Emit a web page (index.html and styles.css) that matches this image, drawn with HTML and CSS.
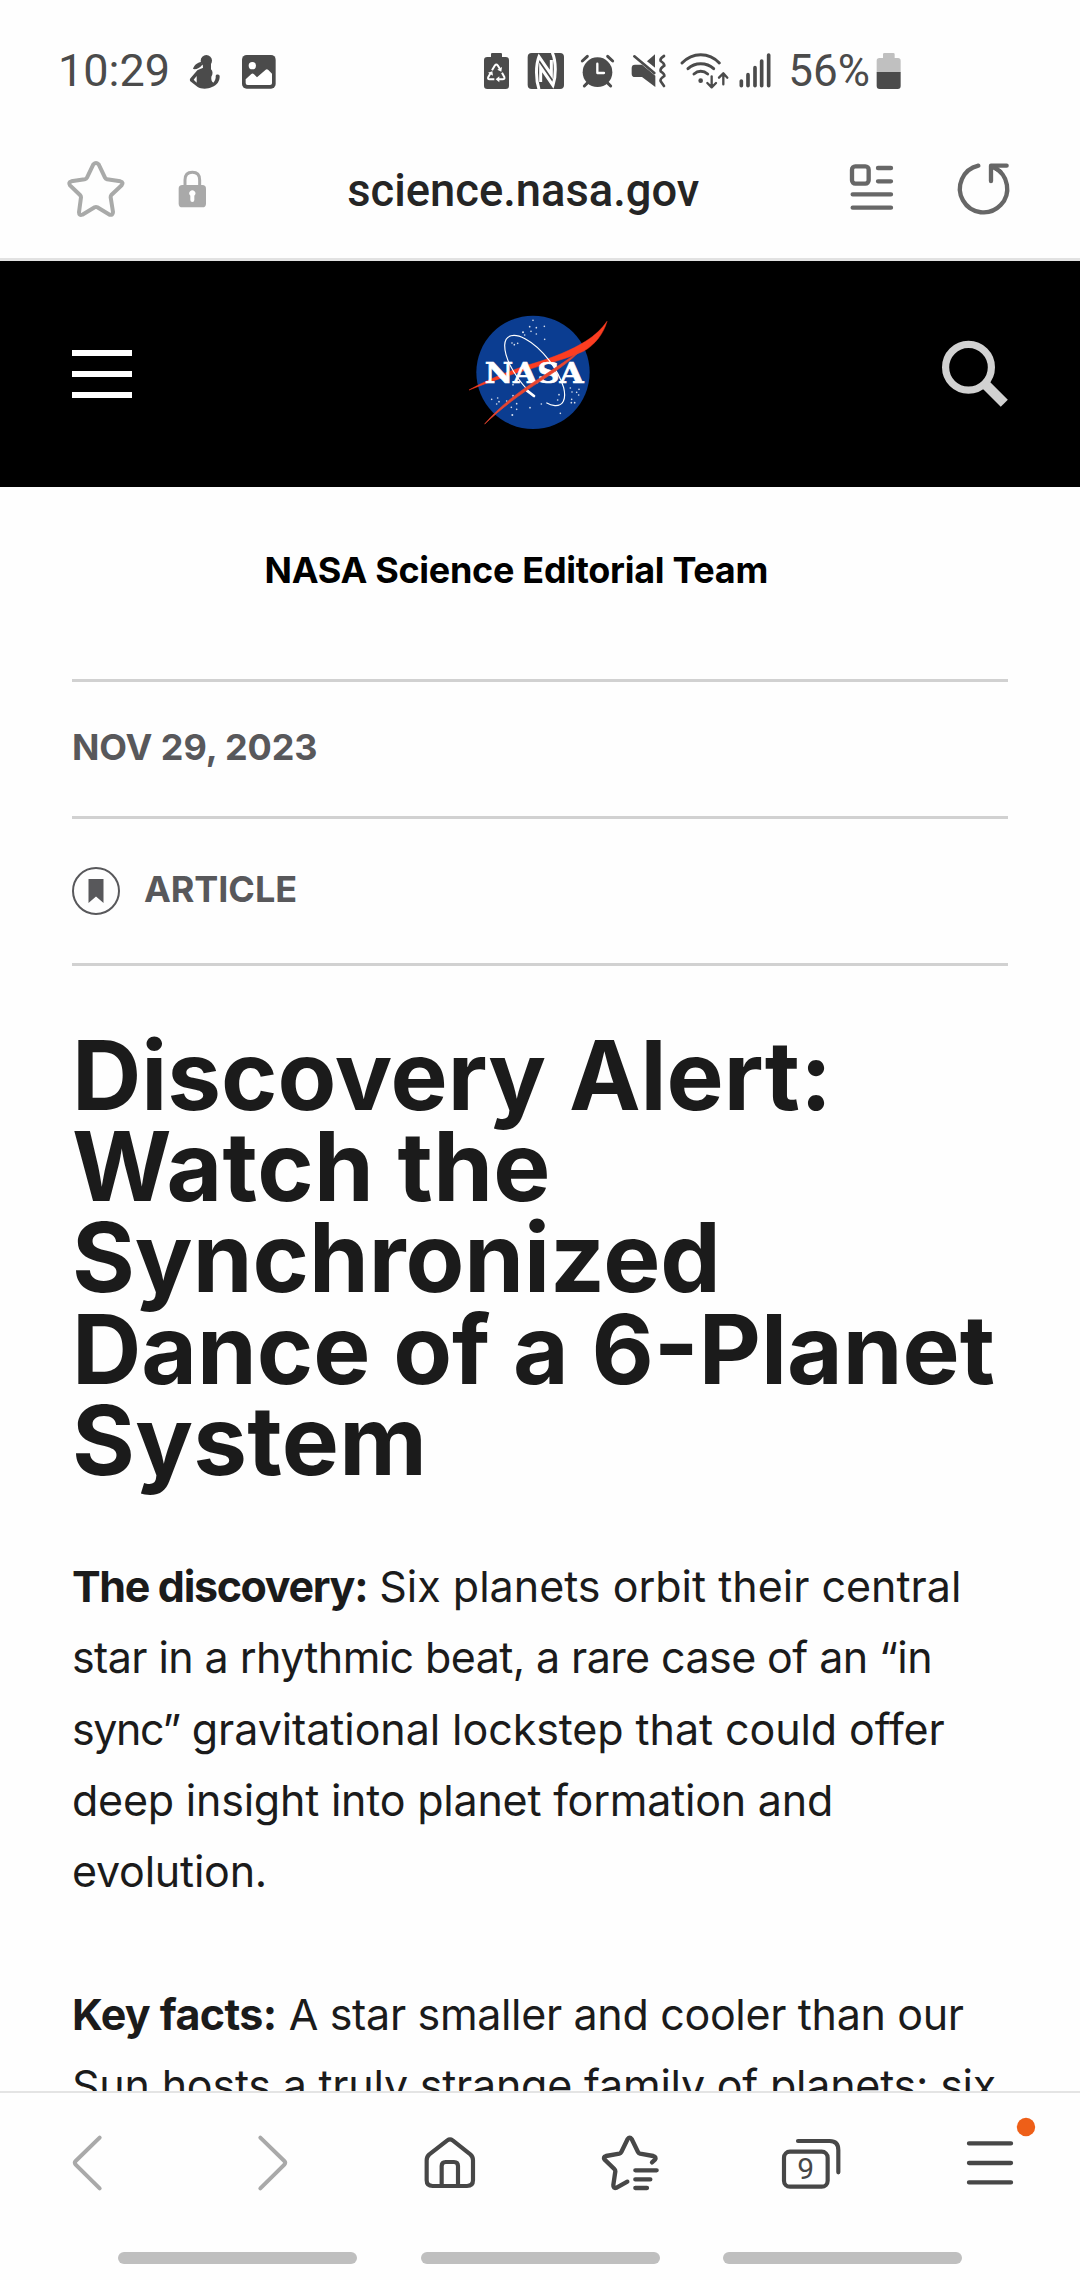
FILE: index.html
```html
<!DOCTYPE html>
<html lang="en">
<head>
<meta charset="utf-8">
<title>Discovery Alert: Watch the Synchronized Dance of a 6-Planet System</title>
<link rel="stylesheet" href="styles.css">
</head>
<body>
<div class="status">
  <span class="clock">10:29</span>
  <svg width="50" height="70" viewBox="430 0 150 210" fill="#4b4b4b">
    <circle cx="500" cy="62" r="17"/>
    <path d="M484 66 C474 68 462 76 460 87 C470 89 480 84 488 74Z"/>
    <path d="M489 70 H514 V88 C520 93 520 103 515 110 C514 118 516 125 521 128 C527 122 529 114 528 108 C529 103 537 102 540 107 C541 122 532 136 517 141 C503 148 484 147 474 141 L452 124 C450 120 450 117 453 114 L473 91 C479 86 488 86 490 83Z"/>
    <path d="M471 108 L462 119 L471 128Z" fill="#fff"/>
  </svg>
  <svg width="50" height="70" viewBox="580 0 150 210">
    <rect x="607" y="45" width="101" height="101" rx="14" fill="#4b4b4b"/>
    <circle cx="638" cy="77" r="11" fill="#fff"/>
    <path d="M618 118 L635 102 Q639 99 643 103 L652 112 L678 89 Q682 86 686 90 L697 101 V130 Q697 135 691 135 H624 Q618 135 618 129Z" fill="#fff"/>
  </svg>
  <div class="system">
    <svg width="46.67" height="70" viewBox="0 0 140 210">
      <path d="M66 39 H93 Q96 39 96 43 V51 H107 Q117 51 117 61 V137 Q117 147 107 147 H52 Q42 147 42 137 V61 Q42 51 52 51 H63 V43 Q63 39 66 39Z" fill="#4b4b4b"/>
      <g fill="none" stroke="#fff" stroke-width="6" stroke-linejoin="round"><path d="M66 91 L75 76 Q79 71 83 76 L90 87"/><path d="M96 98 L103 111 Q105 118 98 118 H86"/><path d="M73 118 H59 Q52 118 55 111 L62 99"/></g>
      <path d="M96 81 L94 95 L82 89Z M88 109 V127 L77 118Z M54 98 L67 94 L69 107Z" fill="#fff"/>
    </svg>
    <svg width="53.33" height="70" viewBox="140 0 160 210">
      <rect x="172" y="39" width="109" height="108" rx="12" fill="#4b4b4b"/>
      <path d="M206 148 C196 118 196 75 206 50 L243 104 V60 M246 38 C258 66 257 110 248 136 L211 82 V126" fill="none" stroke="#fff" stroke-width="9"/>
    </svg>
    <svg width="53.33" height="70" viewBox="300 0 160 210">
      <circle cx="382.500" cy="96.500" r="44.500" fill="#4b4b4b"/>
      <path d="M337 63 L352 49 M413 49 L428 63 M354 127 L343 138 M411 127 L422 138" stroke="#4b4b4b" stroke-width="9" stroke-linecap="round"/>
      <path d="M382 71 V99 H402" fill="none" stroke="#fff" stroke-width="7" stroke-linecap="round" stroke-linejoin="round"/>
    </svg>
    <svg width="50" height="70" viewBox="460 0 150 210">
      <path d="M496 74 H517 L557 107 V141 L517 111 H496 Q486 111 486 101 V84 Q486 74 496 74Z M530 65 L556 43 V87Z" fill="#4b4b4b"/>
      <path d="M500 43 L562 93" stroke="#fff" stroke-width="8"/>
      <path d="M494 49 L554 99" stroke="#4b4b4b" stroke-width="8" stroke-linecap="round"/>
      <path d="M583 48 Q570 56 573 63 Q584 70 584 77 Q570 86 573 94 Q585 101 584 108 Q570 117 573 124 L583 138" fill="none" stroke="#4b4b4b" stroke-width="8" stroke-linecap="round" stroke-linejoin="round"/>
    </svg>
    <svg width="61.67" height="70" viewBox="610 0 185 210" fill="none" stroke="#4b4b4b" stroke-width="9" stroke-linecap="round" stroke-linejoin="round">
      <path d="M637 69 Q661 44 693 44 Q726 44 749 69 M655 86 Q671 71 693 71 Q716 71 732 86 M673 102 Q682 94 693 94 Q705 94 714 102"/>
      <circle cx="693" cy="122" r="7" fill="#4b4b4b" stroke="none"/>
      <path d="M726 109 V141 M713 129 L726 142 L739 129 M761 133 V101 M748 113 L761 100 L773 113" stroke-width="7"/>
    </svg>
    <svg width="43.33" height="70" viewBox="795 0 130 210" stroke="#4b4b4b" stroke-width="11" stroke-linecap="round">
      <path d="M814 123 V137 M834 104 V137 M855 83 V137 M875 63 V137 M896 45 V137"/>
    </svg>
    <span class="charge">56%</span>
    <svg width="40" height="70" viewBox="1210 0 120 210">
      <path d="M1244 39 H1271 Q1275 39 1275 43 V54 H1285 Q1293 54 1293 62 V97 H1221 V62 Q1221 54 1229 54 H1240 V43 Q1240 39 1244 39Z" fill="#c0c0c0"/>
      <path d="M1221 96 H1293 V138 Q1293 147 1284 147 H1230 Q1221 147 1221 138Z" fill="#4b4b4b"/>
    </svg>
  </div>
</div>

<div class="address">
  <svg width="73.33" height="118" viewBox="60 0 220 354" fill="none" stroke="#a9aaa9" stroke-width="12" stroke-linejoin="round">
    <path d="M160 73 Q168 65 176 73 L195 113 Q197 117 201 118 L241 124 Q252 127 245 136 L214 165 Q212 168 212 172 L219 216 Q219 226 209 224 L172 202 Q168 200 164 202 L127 224 Q117 227 117 217 L123 172 Q123 168 120 165 L90 136 Q84 127 94 124 L134 118 Q139 117 141 113Z"/>
  </svg>
  <svg class="lock" width="50" height="118" viewBox="380 0 150 354">
    <path d="M434 140 V120 Q434 97 456 97 Q478 97 478 120 V140" fill="none" stroke="#a9a9a9" stroke-width="9"/>
    <rect x="415" y="135" width="82" height="67" rx="11" fill="#a9a9a9"/>
    <path d="M450 167 A9 9 0 1 1 462 167 V180 Q462 186 456 186 Q450 186 450 180Z" fill="#fff"/>
  </svg>
  <span class="url">science.nasa.gov</span>
  <svg width="56.67" height="118" viewBox="850 0 170 354" fill="none" stroke="#676767" stroke-width="13" stroke-linecap="round">
    <rect x="877" y="79" width="50" height="52" rx="10"/>
    <path d="M955 84 H994 M955 124 H994 M879 163 H994 M879 203 H994"/>
  </svg>
  <svg class="reload" width="66.67" height="118" viewBox="1170 0 200 354" fill="none" stroke="#676767" stroke-width="13" stroke-linecap="round" stroke-linejoin="round">
    <path d="M1255 77 A71 71 0 1 0 1303 83 M1293 123 V77 H1340"/>
    <path d="M1296 79 L1322 95" stroke-width="12"/>
  </svg>
</div>

<header class="masthead">
  <div class="burger"><i></i><i></i><i></i></div>
  <svg class="logo" width="180" height="160" viewBox="0 0 540 480">
    <circle cx="249" cy="247" r="170" fill="#0b3d91"/>
    <g fill="#fff" opacity=".85">
      <circle cx="249" cy="91" r="2.500"/><circle cx="239" cy="110" r="2.500"/><circle cx="259" cy="113" r="2.500"/><circle cx="283" cy="109" r="2.500"/><circle cx="243" cy="124" r="2.500"/><circle cx="259" cy="132" r="2.500"/><circle cx="219" cy="127" r="3"/><circle cx="224" cy="135" r="2.500"/><circle cx="284" cy="148" r="2.500"/><circle cx="186" cy="159" r="2.500"/><circle cx="193" cy="164" r="2.500"/><circle cx="203" cy="160" r="2.500"/><circle cx="189" cy="284" r="2.500"/><circle cx="189" cy="317" r="2.500"/><circle cx="125" cy="328" r="2.500"/><circle cx="143" cy="324" r="2.500"/><circle cx="147" cy="335" r="2.500"/><circle cx="140" cy="342" r="2.500"/><circle cx="170" cy="333" r="2.500"/><circle cx="184" cy="352" r="2.500"/><circle cx="200" cy="341" r="2.500"/><circle cx="200" cy="358" r="2.500"/><circle cx="187" cy="375" r="3"/><circle cx="240" cy="353" r="2.500"/><circle cx="274" cy="342" r="2.500"/><circle cx="331" cy="370" r="2.500"/><circle cx="327" cy="314" r="2.500"/><circle cx="323" cy="330" r="2.500"/><circle cx="361" cy="294" r="2.500"/><circle cx="366" cy="306" r="2.500"/><circle cx="387" cy="298" r="2.500"/><circle cx="380" cy="307" r="2.500"/><circle cx="386" cy="315" r="2.500"/><circle cx="365" cy="328" r="2.500"/><circle cx="364" cy="338" r="2.500"/><circle cx="374" cy="338" r="2.500"/>
    </g>
    <path d="M57 300 C110 270 175 243 244 222 C310 203 365 180 408 153 C436 135 455 117 471 94 C461 130 435 165 400 184 C350 207 295 220 240 237 C175 256 120 275 57 300Z" fill="#fc3d21" stroke="#fc3d21" stroke-width="1.500"/>
    <text class="wordmark" x="104" y="278" textLength="297" lengthAdjust="spacingAndGlyphs">NASA</text>
    <path d="M250 318 C208 277 164 216 164 166 C165 133 193 129 225 146 C278 174 325 241 341 293 C350 331 337 348 315 347 Q302 345 289 338" fill="none" stroke="#fff" stroke-width="3.500"/>
    <path d="M231 302 L252 318" stroke="#fff" stroke-width="8" stroke-linecap="round"/>
    <path d="M104 402 C150 347 211 302 267 266 C310 238 353 209 390 183 C359 214 319 243 275 271 C211 312 155 354 104 402Z" fill="#e8452f" stroke="#e8452f" stroke-width="2"/>
  </svg>
  <svg class="search" width="72" height="72" viewBox="936 335 72 72" fill="none" stroke="#d1d1d1">
    <circle cx="968.500" cy="367.300" r="22.900" stroke-width="7.200"/>
    <path d="M985 384 L1004.300 403.300" stroke-width="10"/>
  </svg>
</header>

<main class="page">
  <div class="row author">NASA Science Editorial Team</div>
  <div class="row date">NOV 29, 2023</div>
  <div class="row kind">
    <svg width="48" height="48" viewBox="0 0 48 48"><circle cx="24" cy="24" r="23" fill="none" stroke="#58585b" stroke-width="2"/><path d="M16.500 12 H31.500 V36 L24 29.500 L16.500 36Z" fill="#58585b"/></svg>
    <span>ARTICLE</span>
  </div>
  <h1>Discovery Alert:<br><span class="h-watch">Watch the</span><br>Synchronized<br>Dance of a 6-Planet<br><span class="h-system">System</span></h1>
  <p><b class="lead-a">The discovery:</b> Six planets orbit their central<br><span class="t6">star in a rhythmic beat, a rare case of an “in</span><br><span class="t14">sync”</span> <span class="t1">gravitational lockstep that could offer</span><br><span class="t2">deep insight into planet formation and</span><br><span class="t2">evolution.</span></p>
  <p><b class="lead-b">Key facts:</b> <span class="t3">A star smaller and cooler than our</span><br><span class="t2">Sun hosts a truly strange family of planets: six</span></p>
</main>

<nav class="toolbar">
  <div class="buttons">
    <svg class="back" width="40" height="105" viewBox="80 39 120 315"><path d="M178 173 L106 243 Q101 248 106 254 L178 325" fill="none" stroke="#a9a9a9" stroke-width="12" stroke-linecap="round"/></svg>
    <svg class="forward" width="40" height="105" viewBox="640 39 120 315"><path d="M662 173 L734 243 Q739 248 734 254 L662 325" fill="none" stroke="#a9a9a9" stroke-width="12" stroke-linecap="round"/></svg>
    <svg class="home" width="60" height="105" viewBox="1140 39 180 315" fill="none" stroke="#474747" stroke-width="12.500" stroke-linejoin="round"><path d="M1222 181 Q1230 175 1238 181 L1291 223 Q1299 230 1299 241 V301 Q1299 318 1281 318 H1178 Q1160 318 1160 301 V241 Q1160 230 1168 223Z M1205 318 V258 Q1205 246 1217 246 H1242 Q1254 246 1254 258 V318"/></svg>
    <svg class="saved" width="66.67" height="105" viewBox="110 39 200 315" fill="none" stroke="#474747" stroke-width="13" stroke-linecap="round" stroke-linejoin="round"><path d="M201 305 L169 323 Q158 327 159 315 L165 274 Q165 270 162 267 L133 239 Q127 231 137 228 L177 221 Q181 220 183 216 L202 177 Q208 169 214 177 L233 216 Q235 220 239 221 L279 228 Q289 231 284 239 L275 247 M225 271 H289 M225 298 H270 M225 324 H260"/></svg>
    <svg class="tabs" width="66.67" height="105" viewBox="650 39 200 315" fill="none" stroke="#474747" stroke-width="12.500" stroke-linecap="round"><rect x="671" y="215" width="131" height="105" rx="18"/><path d="M713 183 H808 Q834 183 834 210 V277"/><text class="count" x="736" y="296" text-anchor="middle">9</text></svg>
    <svg class="more" width="80" height="105" viewBox="1200 39 240 315" stroke="#474747" stroke-width="13" stroke-linecap="round"><path d="M1227 190 H1353 M1227 249 H1353 M1227 307 H1353"/><circle cx="1398" cy="141" r="27.500" fill="#ee5f18" stroke="none"/></svg>
  </div>
  <div class="pills"><i></i><i></i><i></i></div>
</nav>
</body>
</html>
```
FILE: styles.css
```css
* { box-sizing: border-box; }
body {
  margin: 0;
  width: 1080px;
  height: 2280px;
  overflow: hidden;
  display: flex;
  flex-direction: column;
  background: #fefefe;
  font-family: Inter, "Liberation Sans", sans-serif;
}
svg { display: block; flex: none; }

.status {
  height: 140px;
  padding: 40px 0 0 58px;
  display: flex;
  flex: none;
  font-family: Roboto, sans-serif;
  font-size: 44px;
  line-height: 62px;
  color: #4b4b4b;
}
.clock { width: 125.300px; font-size: 45px; }
.system { display: flex; margin-left: 186.700px; }
.charge { width: 95px; padding-left: 10px; }

.address {
  height: 121px;
  padding-left: 60px;
  display: flex;
  flex: none;
  border-bottom: 3px solid #e2e2e2;
}
.lock { margin-left: 33.300px; }
.url {
  width: 626.700px;
  padding-left: 130.700px;
  font: 500 45.300px/102px Roboto, sans-serif;
  color: #252525;
}
.reload { margin-left: 50px; }

.masthead {
  height: 226px;
  padding: 0 72px;
  display: flex;
  flex: none;
  justify-content: space-between;
  background: #000;
}
.burger {
  width: 60px;
  padding-top: 89px;
  display: flex;
  flex-direction: column;
  gap: 15px;
}
.burger i { height: 6px; background: #fff; }
.logo { margin: 29px 0 0 12px; }
.wordmark {
  font: 700 85px "DejaVu Serif", serif;
  fill: #fff;
  stroke: #fff;
  stroke-width: 2px;
}
.search { margin-top: 74px; }

.page {
  flex: 1;
  min-height: 0;
  overflow: hidden;
  padding: 0 72px;
  color: #1b1b1b;
}
.row {
  height: 137px;
  border-bottom: 3px solid #d1d1d1;
  font-size: 36px;
  font-weight: 700;
  line-height: 48px;
  letter-spacing: -0.080px;
  color: #58585b;
}
.author {
  height: 195px;
  padding: 58.600px 0 0 192.500px;
  letter-spacing: -0.300px;
  color: #000;
}
.date { padding-top: 40.600px; }
.kind {
  height: 147px;
  padding-top: 45.600px;
  display: flex;
  gap: 24px;
}
.kind svg { margin-top: 2.400px; }
h1 {
  margin: 64px 0 65.200px;
  font-size: 96px;
  font-weight: 700;
  line-height: 91.200px;
  white-space: nowrap;
}
.h-watch { letter-spacing: 0.400px; }
.h-system { letter-spacing: 0.300px; }
p {
  margin: 0 0 71.280px;
  font-size: 43px;
  line-height: 71.280px;
  white-space: nowrap;
}
.lead-a { letter-spacing: -1.350px; }
.lead-b { letter-spacing: -0.600px; }
.t1 { letter-spacing: -0.080px; }
.t2 { letter-spacing: -0.220px; }
.t3 { letter-spacing: -0.330px; }
.t6 { letter-spacing: -0.590px; }
.t14 { letter-spacing: -1.400px; }

.toolbar {
  height: 189px;
  flex: none;
  border-top: 2px solid #e4e4e4;
  background: #fefefe;
}
.buttons { display: flex; padding-left: 66.700px; }
.forward { margin-left: 146.670px; }
.home { margin-left: 126.670px; }
.saved { margin-left: 116.670px; }
.tabs { margin-left: 113.330px; }
.more { margin-left: 116.670px; }
.count { font: 400 90px Roboto, sans-serif; fill: #474747; stroke: none; }
.pills { display: flex; gap: 63.500px; padding: 54px 0 0 118px; }
.pills i { width: 239px; height: 12px; border-radius: 6px; background: #bfbfbf; }
```
